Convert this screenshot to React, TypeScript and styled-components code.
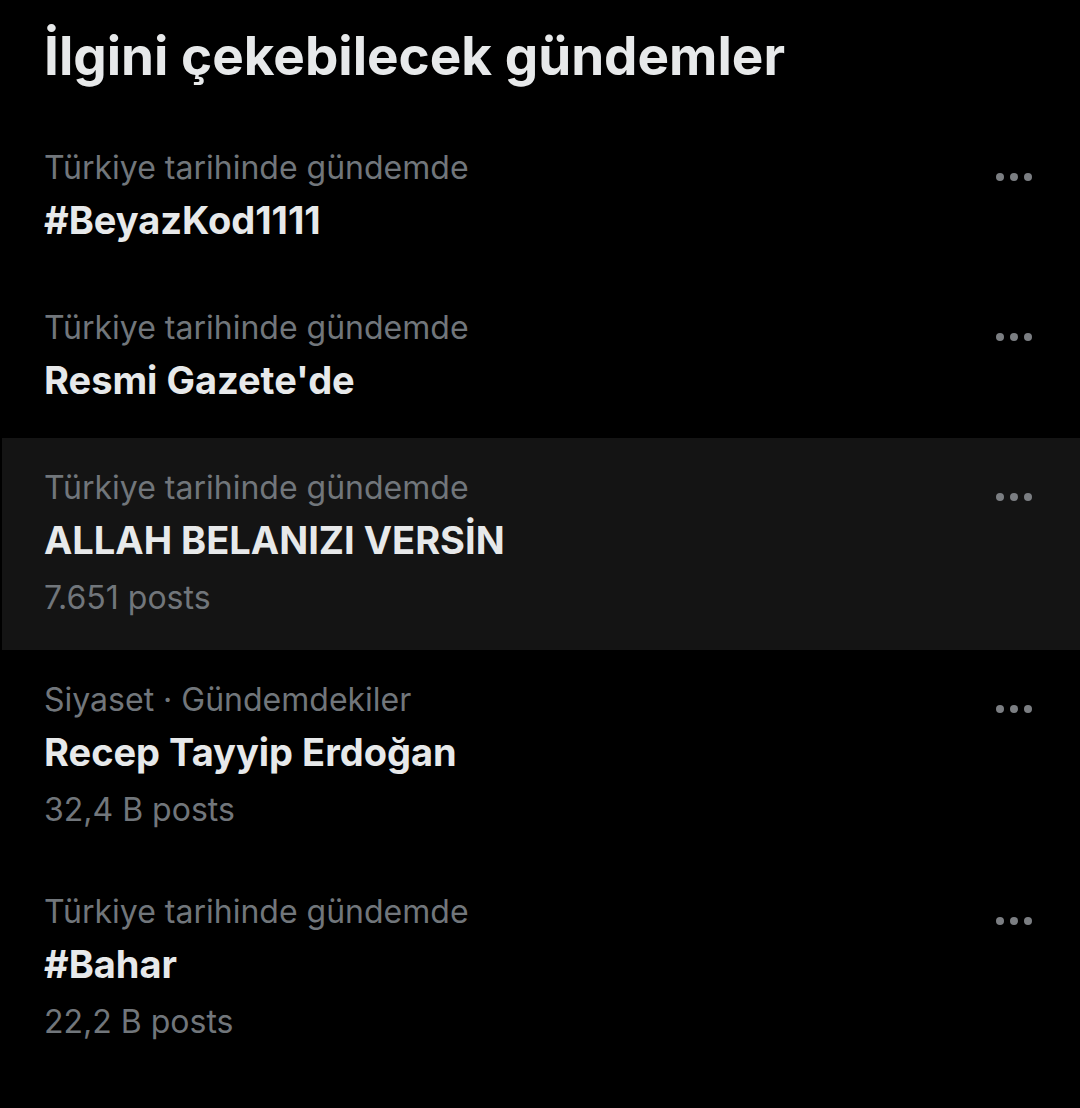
import React from 'react'
import styled, { createGlobalStyle } from 'styled-components'

type Trend = {
  context: string
  name: string
  posts?: string
  active?: boolean
}

const trends: Trend[] = [
  { context: 'Türkiye tarihinde gündemde', name: '#BeyazKod1111' },
  { context: 'Türkiye tarihinde gündemde', name: "Resmi Gazete'de" },
  {
    context: 'Türkiye tarihinde gündemde',
    name: 'ALLAH BELANIZI VERSİN',
    posts: '7.651 posts',
    active: true,
  },
  {
    context: 'Siyaset · Gündemdekiler',
    name: 'Recep Tayyip Erdoğan',
    posts: '32,4 B posts',
  },
  { context: 'Türkiye tarihinde gündemde', name: '#Bahar', posts: '22,2 B posts' },
]

export default function App() {
  return (
    <>
      <GlobalStyle />
      <Page>
        <Heading>İlgini çekebilecek gündemler</Heading>
        <List>
          {trends.map((t, i) => (
            <TrendRow key={i} $active={t.active} $withPosts={!!t.posts}>
              <TrendText>
                <Context>{t.context}</Context>
                <Name>{t.name}</Name>
                {t.posts && <Posts>{t.posts}</Posts>}
              </TrendText>
              <MoreButton aria-label="Daha fazla">
                <Dot />
                <Dot />
                <Dot />
              </MoreButton>
            </TrendRow>
          ))}
        </List>
      </Page>
    </>
  )
}

const GlobalStyle = createGlobalStyle`
  html, body {
    margin: 0;
    padding: 0;
    background: #000000;
  }
  body {
    font-family: Inter, "Noto Sans", "Liberation Sans", sans-serif;
    color: #e7e9ea;
  }
`

const Page = styled.div`
  width: 1080px;
  min-height: 1108px;
  background: #000000;
`

const Heading = styled.h2`
  margin: 0;
  padding: 24px 44px 0;
  height: 98px;
  box-sizing: border-box;
  font-size: 53px;
  line-height: 64px;
  font-weight: 700;
  color: #e7e9ea;
  letter-spacing: 0;
`

const List = styled.div`
  display: flex;
  flex-direction: column;
  padding-top: 20px;
`

const TrendRow = styled.div<{ $active?: boolean; $withPosts?: boolean }>`
  display: flex;
  align-items: flex-start;
  justify-content: space-between;
  margin-left: 2px;
  padding: 30px 48px ${p => (p.$withPosts ? '34px' : '36px')} 42px;
  background: ${p => (p.$active ? '#141414' : 'transparent')};
`

const TrendText = styled.div`
  display: flex;
  flex-direction: column;
`

const Context = styled.div`
  font-size: 32px;
  line-height: 40px;
  color: #71767b;
`

const Name = styled.div`
  margin-top: 10px;
  font-size: 38px;
  line-height: 44px;
  font-weight: 700;
  color: #e7e9ea;
`

const Posts = styled.div`
  margin-top: 18px;
  font-size: 32px;
  line-height: 36px;
  color: #71767b;
`

const MoreButton = styled.div`
  display: flex;
  gap: 6px;
  margin-top: 25px;
`

const Dot = styled.span`
  width: 8px;
  height: 8px;
  border-radius: 50%;
  background: #7b7e82;
`
